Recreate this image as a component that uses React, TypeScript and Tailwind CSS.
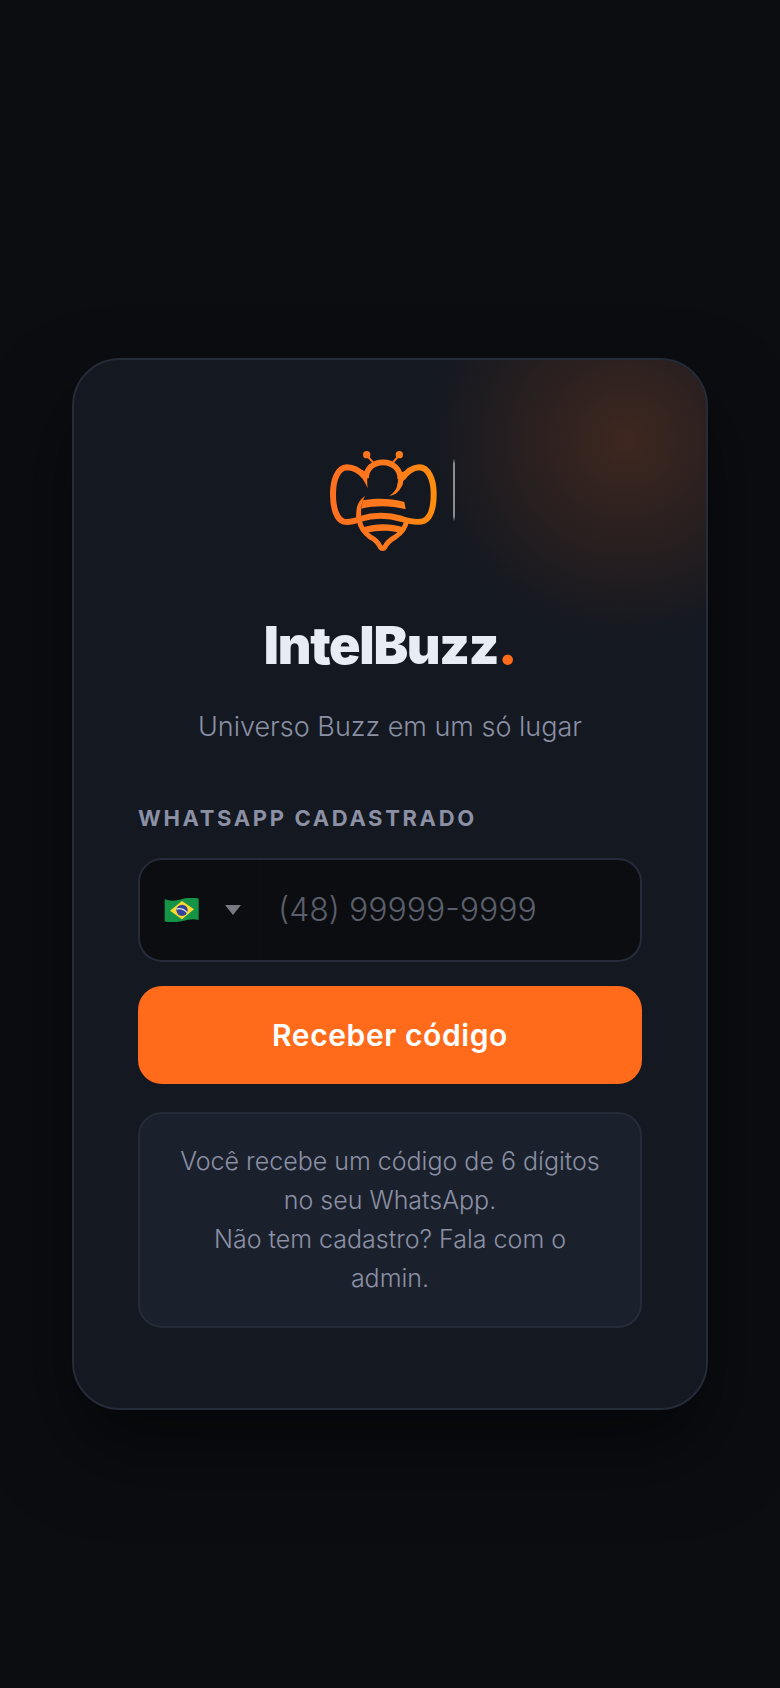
import React, { useState } from 'react'

const BeeLogo = () => (
  <svg className="h-[120px] w-40" viewBox="0 30 480 360" fill="none" role="img" aria-label="IntelBuzz">
    <defs>
      <linearGradient id="bee" gradientUnits="userSpaceOnUse" x1="60" y1="0" x2="380" y2="0">
        <stop offset="0" stopColor="#ff6f20" />
        <stop offset="0.6" stopColor="#ff7a1c" />
        <stop offset="1" stopColor="#ff8f0c" />
      </linearGradient>
      <linearGradient id="divider" gradientUnits="userSpaceOnUse" x1="0" y1="86" x2="0" y2="274">
        <stop offset="0" stopColor="#fff" stopOpacity="0" />
        <stop offset="0.08" stopColor="#fff" />
        <stop offset="0.92" stopColor="#fff" />
        <stop offset="1" stopColor="#fff" stopOpacity="0" />
      </linearGradient>
    </defs>

    {/* antennae */}
    <g fill="url(#bee)">
      <circle cx="170" cy="74" r="11" />
      <circle cx="268" cy="74" r="11" />
    </g>
    <path d="M174 80 L189 97 M264 80 L249 97" stroke="url(#bee)" strokeWidth="6" />

    {/* head */}
    <path d="M168 145 C168 116 190 97 219 97 C249 97 271 118 271 146" stroke="url(#bee)" strokeWidth="17" />
    <path d="M263 140 C267 166 258 185 238 197 C256 196 268 184 278 164 L280 140 Z" fill="url(#bee)" />

    {/* wings */}
    <path
      d="M163 139 C148 122 132 112 111 112 C82 114 69 150 69 193 C69 235 80 268 101 275 C116 278 132 274 150 267 C196 253 235 255 276 267 C304 276 326 279 343 272 C363 262 371 229 371 191 C371 148 355 112 327 112 C307 113 291 125 277 145"
      stroke="url(#bee)"
      strokeWidth="18"
    />
    <path d="M157 121 L176 128 C171 142 171 155 173 175 C164 155 156 143 147 132 Z" fill="url(#bee)" />
    <path d="M270 128 L286 123 L291 136 C281 149 275 166 266 180 L262 165 Z" fill="url(#bee)" />

    {/* body */}
    <path d="M166 198 C144 211 136 233 139 270 L154 263 C152 239 154 214 166 198 Z" fill="url(#bee)" />
    <path d="M158 211 C194 204 241 204 283 216 L287 238 C242 226 197 226 154 236 Z" fill="url(#bee)" />
    <path d="M160 292 C198 280 241 280 280 292 L269 308 C232 300 203 301 169 309 Z" fill="url(#bee)" />
    <path
      d="M148 270 C151 294 165 310 182 322 C202 332 207 343 211 351 C215 357 221 357 225 351 C230 340 239 330 256 321 C273 310 286 294 290 272"
      stroke="url(#bee)"
      strokeWidth="15"
    />

    <path d="M432 86 V274" stroke="url(#divider)" strokeWidth="3" />
  </svg>
)

const BrazilFlag = () => (
  <svg className="h-6 w-9" viewBox="0 0 108 72" aria-hidden="true">
    <path d="M2 4 C25 12 42 6 58 2 C76 -2 90 -2 104 2 V66 C86 61 72 65 56 69 C38 73 22 75 2 70 Z" fill="#159447" />
    <path d="M18 38 L54 9 L90 34 L54 64 Z" fill="#fcd92f" />
    <circle cx="54" cy="37" r="17" fill="#35439b" />
    <path d="M38 33 C50 30 61 34 69 44" stroke="#dfe5f5" strokeWidth="4" fill="none" />
  </svg>
)

const App = () => {
  const [phone, setPhone] = useState('')

  return (
    <main className="flex min-h-screen items-center justify-center bg-[#0b0d11] px-[72px] pt-20 font-['Inter','Liberation_Sans',sans-serif]">
      <section className="relative w-full max-w-3xl overflow-hidden rounded-[48px] border-2 border-[#252b38] bg-[#141820] px-16 py-20 shadow-[0_40px_80px_rgba(0,0,0,0.5)]">
        <div className="pointer-events-none absolute -right-[120px] -top-[120px] size-[400px] bg-[radial-gradient(closest-side,rgba(255,107,26,0.18),transparent)]" />

        <div className="relative">
          <div className="flex justify-center">
            <BeeLogo />
          </div>

          <h1 className="mt-14 text-center text-[52px] font-black leading-[60px] tracking-tight text-[#e8ecf5]">
            IntelBuzz<span className="text-[#ff6b1a]">.</span>
          </h1>
          <p className="mt-8 text-center text-[27px] font-light leading-[38px] text-[#8b90a5]">
            Universo Buzz em um só lugar
          </p>

          <form className="mt-14" onSubmit={(e) => e.preventDefault()}>
            <label htmlFor="phone" className="block text-[22px] font-bold uppercase leading-[32px] tracking-[0.12em] text-[#8b90a5]">
              WhatsApp cadastrado
            </label>

            <div className="mt-6 flex h-[104px] overflow-hidden rounded-3xl border-2 border-[#252b38] bg-[#0b0d11]">
              <div className="relative flex w-[120px] shrink-0 items-center justify-between border-r border-[#0e1015] pl-6 pr-[18px]">
                <BrazilFlag />
                <svg className="h-[10px] w-4" viewBox="0 0 16 10" aria-hidden="true">
                  <path d="M0 0 H16 L8 10 Z" fill="#777a80" />
                </svg>
                <select aria-label="País" className="absolute inset-0 cursor-pointer opacity-0">
                  <option>Brasil</option>
                </select>
              </div>
              <input
                id="phone"
                type="tel"
                value={phone}
                onChange={(e) => setPhone(e.target.value)}
                placeholder="(48) 99999-9999"
                className="min-w-0 flex-1 bg-transparent px-[18px] text-[32px] font-light text-[#e8ecf5] outline-none placeholder:text-[#5a5f6b]"
              />
            </div>

            <button
              type="submit"
              className="mt-6 h-[98px] w-full rounded-3xl bg-[#ff6b1a] text-[30px] font-semibold tracking-[0.02em] text-white"
            >
              Receber código
            </button>
          </form>

          <p className="mt-7 rounded-3xl border-2 border-[#252b38] bg-[#1b212c] px-8 py-7 text-center text-[25px] font-light leading-[39px] text-[#8b90a5]">
            Você recebe um código de 6 dígitos no seu WhatsApp.
            <br />
            Não tem cadastro? Fala com o admin.
          </p>
        </div>
      </section>
    </main>
  )
}

export default App
